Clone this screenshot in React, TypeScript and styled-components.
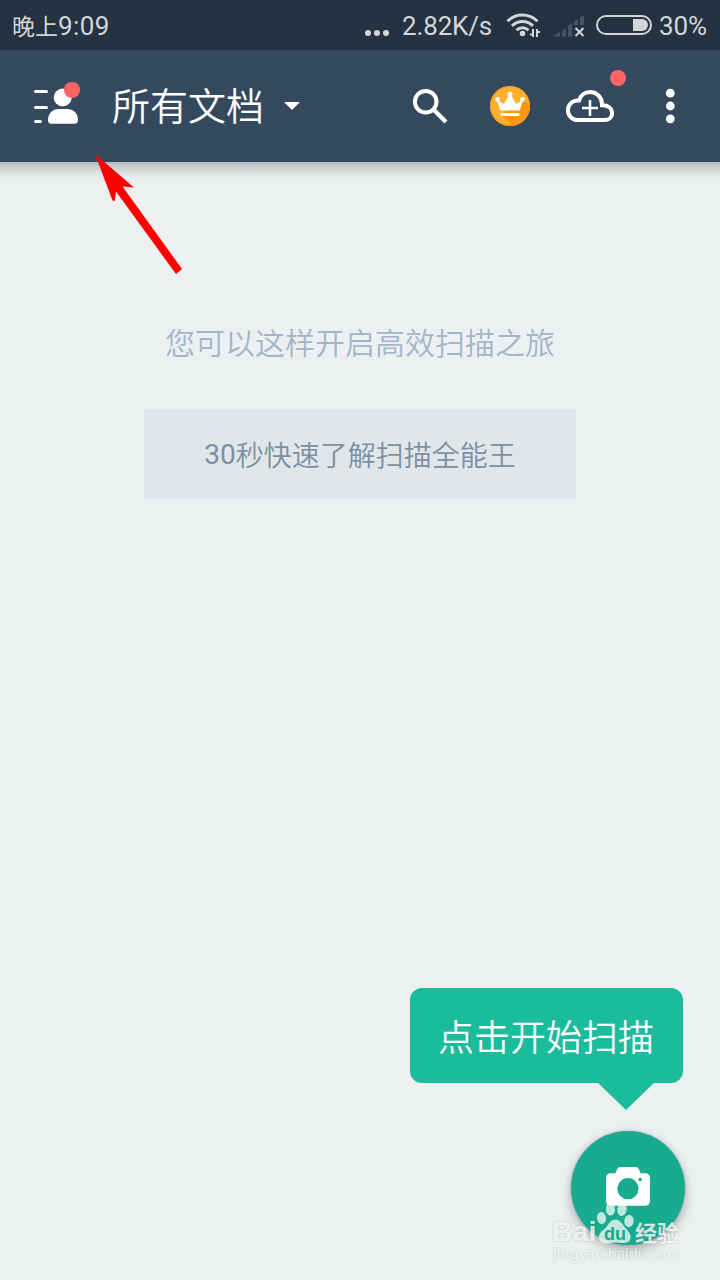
import React from "react";
import styled, { createGlobalStyle } from "styled-components";

const GlobalStyle = createGlobalStyle`
  * { box-sizing: border-box; }
  html, body { margin: 0; padding: 0; }
  body {
    width: 720px;
    height: 1280px;
    overflow: hidden;
    background: #ecf0f1;
    font-family: Roboto, "Noto Sans CJK SC", sans-serif;
  }
  svg { display: block; flex: none; }
`;

const Screen = styled.div`
  position: relative;
  display: flex;
  flex-direction: column;
  width: 720px;
  height: 1280px;
  overflow: hidden;
  background: #ecf0f1;
`;

const StatusBar = styled.header`
  display: flex;
  align-items: center;
  justify-content: space-between;
  height: 50px;
  padding: 0 12px;
  background: #253241;
  color: #d3d6d9;
  font-size: 26px;
  line-height: 50px;
  white-space: nowrap;
`;

const Clock = styled.div`
  display: flex;
  padding-top: 3px;
  letter-spacing: 0.4px;
`;

const ClockPeriod = styled.span`
  padding-top: 2px;
  font-size: 23px;
  letter-spacing: 0;
`;

const StatusGroup = styled.div`
  display: flex;
  align-items: center;
`;

const StatusText = styled.span<{ $width: number; $gap?: number }>`
  width: ${(p) => p.$width}px;
  margin-left: ${(p) => p.$gap ?? 0}px;
  padding-top: 1px;
  letter-spacing: -0.15px;
`;

const DotsMargin = styled.span`
  padding-top: 15px;
`;

const SignalMargin = styled.span`
  margin: 4px 11px 0 12px;
`;

const Toolbar = styled.nav`
  position: relative;
  z-index: 1;
  display: flex;
  align-items: center;
  justify-content: space-between;
  height: 112px;
  padding: 0 26px 0 32px;
  background: #34495e;
  color: #fff;
`;

const ToolbarShadow = styled.div`
  height: 18px;
  margin-bottom: -18px;
  background: linear-gradient(#b9bcbe, #cfd2d3 35%, #e4e8e9 70%, #ecf0f1);
`;

const ToolbarStart = styled.div`
  display: flex;
  align-items: center;
`;

const ToolbarActions = styled.div`
  display: flex;
  align-items: center;
  gap: 32px;
`;

const IconButton = styled.button`
  position: relative;
  display: flex;
  align-items: center;
  justify-content: center;
  width: 48px;
  height: 48px;
  padding: 0;
  border: 0;
  background: none;
  color: inherit;
`;

const Badge = styled.span<{ $top: number; $right: number }>`
  position: absolute;
  top: ${(p) => p.$top}px;
  right: ${(p) => p.$right}px;
  width: 16px;
  height: 16px;
  border-radius: 50%;
  background: #ff6464;
`;

const Title = styled.h1`
  margin: 0 0 0 32px;
  padding-top: 2px;
  font-size: 38px;
  font-weight: 350;
  line-height: 56px;
`;

const Caret = styled.span`
  margin: 0 0 0 20px;
  border: 8px solid transparent;
  border-top-color: #fff;
  border-bottom: 0;
`;

const Content = styled.main`
  display: flex;
  flex: 1;
  flex-direction: column;
  align-items: center;
  padding-top: 159px;
`;

const Hint = styled.p`
  margin: 0;
  color: #a3b6c9;
  font-size: 30px;
  font-weight: 350;
  line-height: 46px;
`;

const GuideButton = styled.button`
  display: flex;
  align-items: center;
  justify-content: center;
  width: 432px;
  height: 90px;
  margin-top: 42px;
  padding: 0 0 1px;
  border: 0;
  border-radius: 4px;
  background: #e1e6e9;
  color: #7b90a3;
  font: 350 28px Roboto, "Noto Sans CJK SC", sans-serif;
`;

const GuideSeconds = styled.span`
  padding-top: 2px;
  font-weight: 400;
`;

const ScanArea = styled.div`
  display: flex;
  flex-direction: column;
  align-items: flex-end;
  width: 100%;
  margin-top: auto;
  padding: 0 35px 35px 0;
`;

const Bubble = styled.div`
  position: relative;
  width: 273px;
  height: 95px;
  margin: 0 2.500px 48px 0;
  border-radius: 12px;
  background: #1abc9c;
  color: #fff;
  font-size: 36px;
  font-weight: 350;
  line-height: 103px;
  text-align: center;

  &::after {
    content: "";
    position: absolute;
    top: 94px;
    right: 28px;
    border: 29px solid transparent;
    border-top: 28px solid #1abc9c;
    border-bottom: 0;
  }
`;

const CameraButton = styled.button`
  display: flex;
  align-items: center;
  justify-content: center;
  width: 114px;
  height: 114px;
  padding: 0 0 3px;
  border: 0;
  border-radius: 50%;
  background: #18ac8f;
  box-shadow: 0 5px 12px rgba(0, 0, 0, 0.28), 0 0 3px rgba(0, 0, 0, 0.2);
`;

const Pointer = styled.svg`
  position: absolute;
  z-index: 2;
  top: 150px;
  left: 90px;
`;

const Watermark = styled.div`
  position: absolute;
  z-index: 3;
  top: 1201px;
  left: 552px;
  width: 132px;
  color: rgba(255, 255, 255, 0.78);
  text-shadow: 0 0 2px rgba(100, 110, 110, 0.4);
  white-space: nowrap;
`;

const WatermarkBrand = styled.div`
  display: flex;
  align-items: flex-end;
  height: 43px;
`;

const BrandLatin = styled.span`
  width: 44px;
  font: 700 28.500px/26px "Liberation Sans", sans-serif;
`;

const BrandPaw = styled.svg`
  margin-right: 1px;
`;

const BrandHan = styled.span`
  font: 700 22px/26px "Noto Sans CJK SC", sans-serif;
`;

const WatermarkUrl = styled.div`
  padding-left: 1px;
  font: 400 15px/18px "Noto Sans", sans-serif;
  letter-spacing: -0.15px;
`;

const WifiIcon = () => (
  <svg width="36" height="26" viewBox="0 0 36 26" fill="none" stroke="#d3d6d9" strokeWidth="3">
    <path d="M2.500 9.300a21 21 0 0 1 30 0" />
    <path d="M7 13.900a14.800 14.800 0 0 1 21 0" />
    <path d="M11.500 18.300a8.500 8.500 0 0 1 12 0" />
    <circle cx="17.500" cy="21.500" r="2.800" fill="#d3d6d9" stroke="none" />
    <path d="M25.500 16.500h12v10h-12z" fill="#253241" stroke="none" />
    <path d="M28 17v8M32 17v8" strokeWidth="2" />
    <path d="M25 22.500h3M32 20h3" strokeWidth="1.800" />
  </svg>
);

const SignalIcon = () => (
  <svg width="32" height="24" viewBox="0 0 32 24">
    <path
      d="M0 21.500 7 17v4.500zM9 16l4-3v8.500H9zM15 11l4-3v13.500h-4zM21 7l4-3v6h-4zM27 2.500l4-2.500v10h-4z"
      fill="#485361"
    />
    <path d="m22.500 13 8 8m0-8-8 8" stroke="#d3d6d9" strokeWidth="2" />
  </svg>
);

const BatteryIcon = () => (
  <svg width="57" height="20" viewBox="0 0 57 20">
    <rect x="1" y="1" width="54" height="18" rx="9" fill="none" stroke="#d3d6d9" strokeWidth="2" />
    <path d="M37 4h9a6 6 0 0 1 0 12h-9z" fill="#d3d6d9" />
  </svg>
);

const DotsIcon = () => (
  <svg width="26" height="6" viewBox="0 0 26 6" fill="#d3d6d9">
    <circle cx="3" cy="3" r="3" />
    <circle cx="12" cy="3" r="3" />
    <circle cx="21" cy="3" r="3" />
  </svg>
);

const AccountIcon = () => (
  <svg width="48" height="48" viewBox="0 0 48 48" fill="#fff">
    <rect x="2" y="8" width="14" height="3" rx="1.500" />
    <rect x="2" y="24" width="14" height="3" rx="1.500" />
    <rect x="2" y="38" width="8" height="3" rx="1.500" />
    <circle cx="30.700" cy="15.500" r="9" />
    <path d="M16 38.300C16 31.300 20.500 27 27 27h8c6.500 0 11 4.300 11 11.300 0 2.200-1.200 3.500-3.200 3.500H19.200c-2 0-3.200-1.300-3.200-3.500z" />
  </svg>
);

const SearchIcon = () => (
  <svg width="48" height="48" viewBox="0 0 48 48" fill="none" stroke="#fff">
    <circle cx="19.700" cy="19.800" r="10.800" strokeWidth="4" />
    <path d="m27.500 27.500 12.500 12.500" strokeWidth="4.200" />
  </svg>
);

const CrownIcon = () => (
  <svg width="48" height="48" viewBox="0 0 48 48">
    <defs>
      <clipPath id="coin"><circle cx="24" cy="24" r="20" /></clipPath>
    </defs>
    <circle cx="24" cy="24" r="20" fill="#ffb02e" />
    <path d="m38 18 10 10v20H32L15 33l13-9z" fill="#ff9514" clipPath="url(#coin)" />
    <circle cx="24" cy="24" r="19.500" fill="none" stroke="#f79a16" />
    <g fill="#fff">
      <circle cx="24" cy="12" r="2.500" />
      <circle cx="11.500" cy="17.300" r="2.400" />
      <circle cx="36.500" cy="17.300" r="2.400" />
      <path d="m11 18 7 4L23 13h2l5 9 7-4-3.300 10.500H14.300z" />
      <rect x="14.500" y="31" width="19" height="3" rx="1" />
    </g>
  </svg>
);

const CloudIcon = () => (
  <svg width="48" height="48" viewBox="0 0 48 48" fill="none" stroke="#fff" strokeWidth="4">
    <path d="M11.800 38.100a9.800 9.800 0 0 1-.2-19.700h1.500C14.500 13.500 18.700 10 24 10c6.700 0 12 5.300 12 12v1.200c6-.3 10.100 3.200 10.100 7.700 0 4.200-3.100 7.200-7.600 7.200z" />
    <path d="M24 18v16M16 26h16" strokeWidth="2.600" />
  </svg>
);

const MoreIcon = () => (
  <svg width="48" height="48" viewBox="0 0 48 48" fill="#fff">
    <circle cx="24.300" cy="11.200" r="4.400" />
    <circle cx="24.300" cy="24" r="4.400" />
    <circle cx="24.300" cy="36.800" r="4.400" />
  </svg>
);

const CameraIcon = () => (
  <svg width="44" height="39" viewBox="0 0 44 39">
    <path
      d="M14 0h16c1.500 0 2.300.7 2.800 2l1.700 4.300H39c3 0 5 2 5 5v22.400c0 3-2 5-5 5H5c-3 0-5-2-5-5V11.300c0-3 2-5 5-5h4.500L11.200 2C11.700.7 12.500 0 14 0z"
      fill="#fff"
    />
    <circle cx="22" cy="21.700" r="10.600" fill="#18ac8f" />
    <circle cx="34.200" cy="12.500" r="1.800" fill="#18ac8f" />
  </svg>
);

export default function App() {
  return (
    <Screen>
      <GlobalStyle />
      <StatusBar>
        <Clock>
          <ClockPeriod>晚上</ClockPeriod>
          <span>9:09</span>
        </Clock>
        <StatusGroup>
          <DotsMargin>
            <DotsIcon />
          </DotsMargin>
          <StatusText $width={103} $gap={11}>2.82K/s</StatusText>
          <WifiIcon />
          <SignalMargin>
            <SignalIcon />
          </SignalMargin>
          <BatteryIcon />
          <StatusText $width={49} $gap={6}>30%</StatusText>
        </StatusGroup>
      </StatusBar>

      <Toolbar>
        <ToolbarStart>
          <IconButton aria-label="账户">
            <AccountIcon />
            <Badge $top={0} $right={0} />
          </IconButton>
          <Title>所有文档</Title>
          <Caret />
        </ToolbarStart>
        <ToolbarActions>
          <IconButton aria-label="搜索"><SearchIcon /></IconButton>
          <IconButton aria-label="会员"><CrownIcon /></IconButton>
          <IconButton aria-label="云同步">
            <CloudIcon />
            <Badge $top={-12} $right={-12} />
          </IconButton>
          <IconButton aria-label="更多"><MoreIcon /></IconButton>
        </ToolbarActions>
      </Toolbar>
      <ToolbarShadow />

      <Content>
        <Hint>您可以这样开启高效扫描之旅</Hint>
        <GuideButton>
          <GuideSeconds>30</GuideSeconds>
          <span>秒快速了解扫描全能王</span>
        </GuideButton>
        <ScanArea>
          <Bubble>点击开始扫描</Bubble>
          <CameraButton aria-label="扫描">
            <CameraIcon />
          </CameraButton>
        </ScanArea>
      </Content>

      <Pointer width="100" height="130" viewBox="0 0 100 130" fill="#f00">
        <path d="M5 4 44 37.500 32.500 36.500 92 119 86 124 26 41.500 24.800 51 22.500 50.500z" />
      </Pointer>

      <Watermark>
        <WatermarkBrand>
          <BrandLatin>Bai</BrandLatin>
          <BrandPaw width="38" height="42" viewBox="0 0 38 42">
            <g fill="#fff" fillOpacity="0.72">
              <ellipse cx="5.500" cy="16" rx="4.500" ry="6" transform="rotate(-8 5.500 16)" />
              <ellipse cx="14.500" cy="7" rx="4.500" ry="6.600" />
              <ellipse cx="26" cy="7.500" rx="4.700" ry="6.500" transform="rotate(10 26 7.500)" />
              <ellipse cx="33" cy="19" rx="4.700" ry="6" transform="rotate(8 33 19)" />
              <path d="M19 17.500c5 0 7 4 10 8 3 3.500 6 6 5.500 10.500-.8 4.500-5 5.500-9 5-4-.8-8-.8-12 0-5 1-10-1-10.500-5-.5-5 3-7 6.500-10 3-3.500 5-8.500 9.500-8.500z" />
            </g>
            <text x="19" y="38" textAnchor="middle" fill="#18a98c" fontFamily="Liberation Sans, sans-serif" fontSize="18" fontWeight="700" style={{ textShadow: "none" }}>du</text>
          </BrandPaw>
          <BrandHan>经验</BrandHan>
        </WatermarkBrand>
        <WatermarkUrl>jingyan.baidu.com</WatermarkUrl>
      </Watermark>
    </Screen>
  );
}
